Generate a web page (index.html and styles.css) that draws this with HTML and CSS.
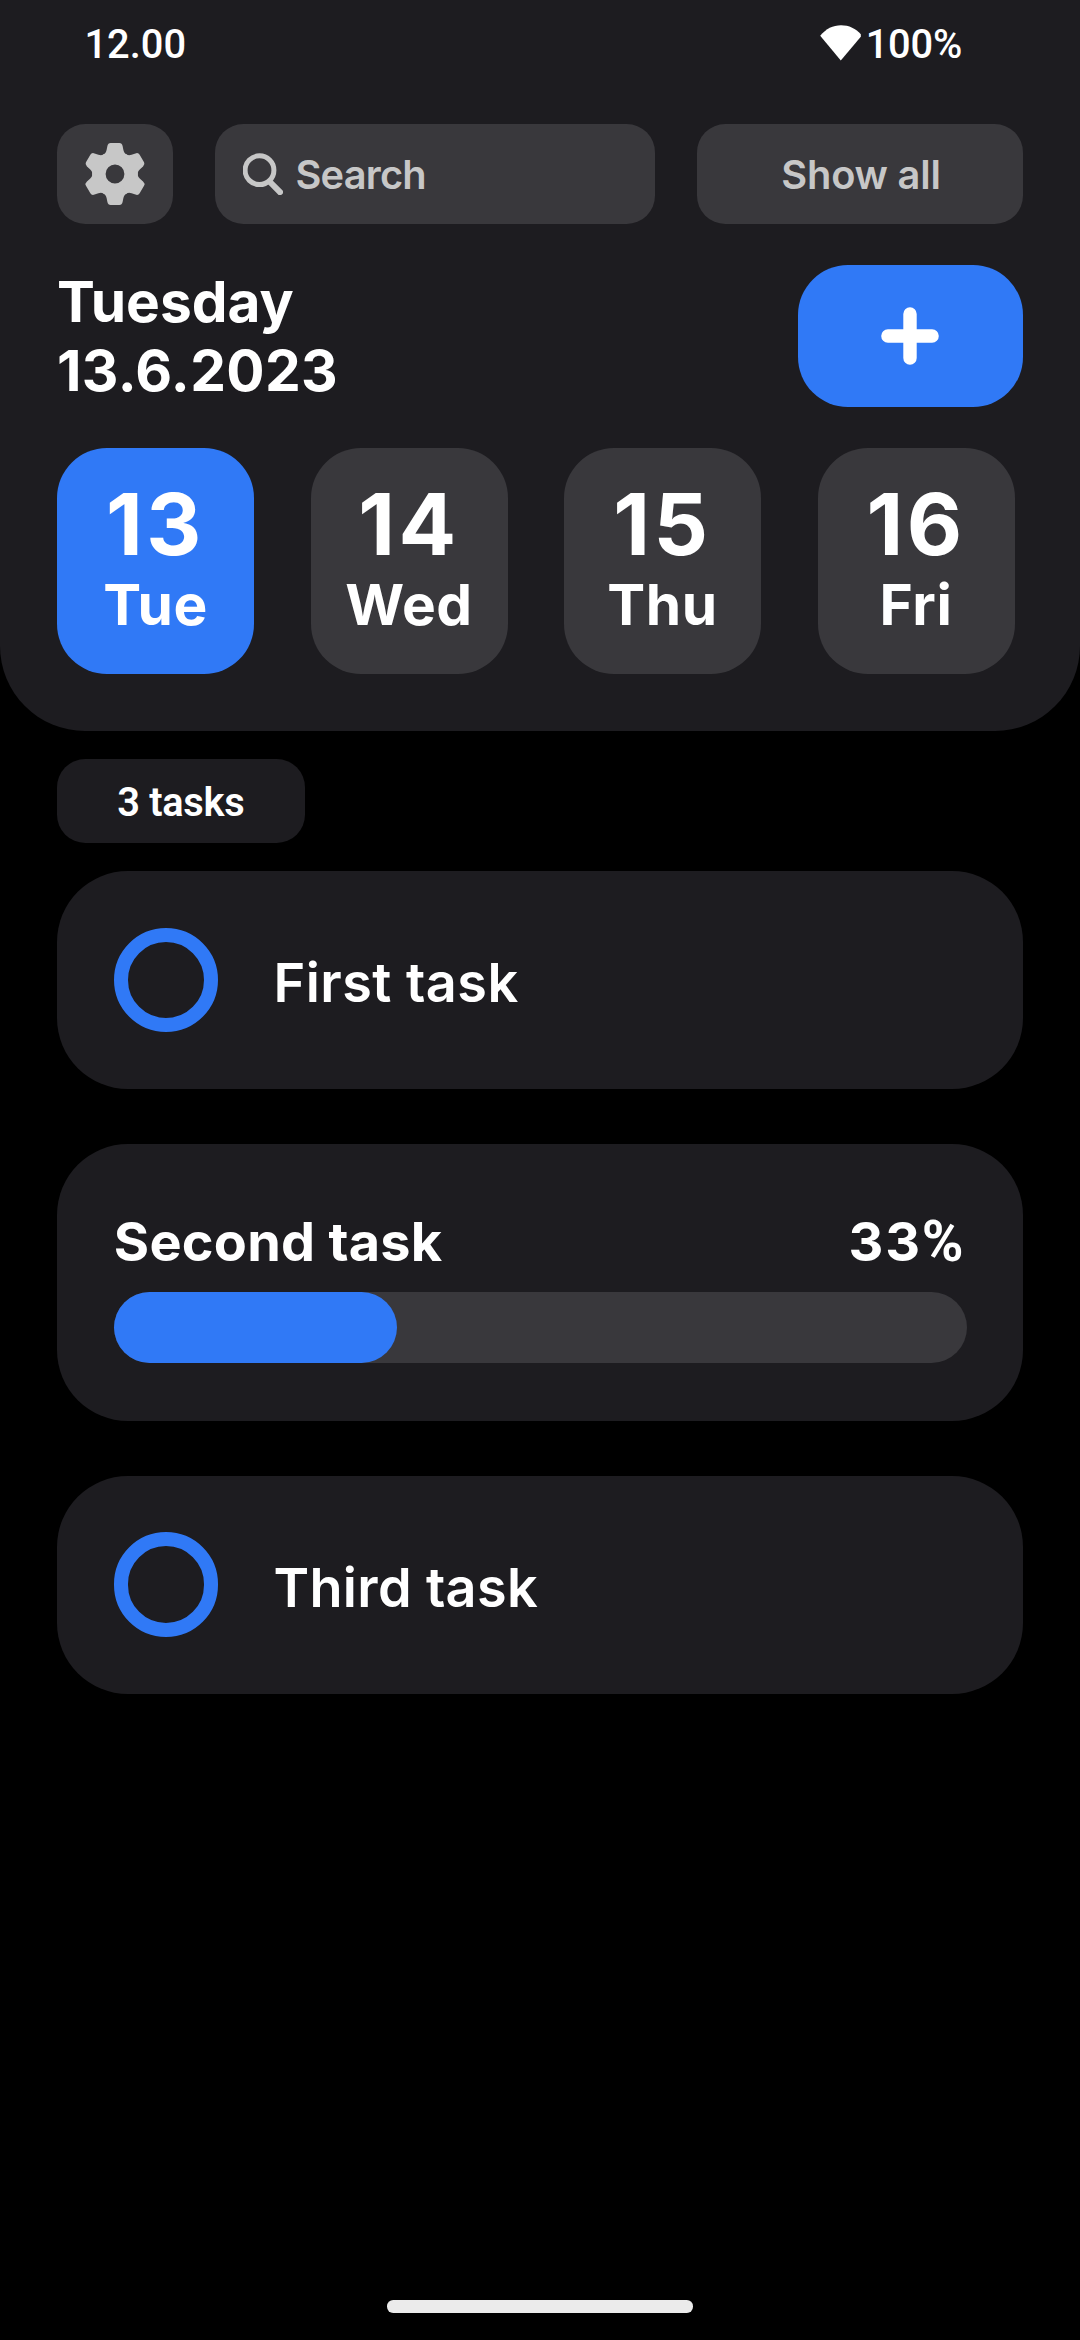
FILE: index.html
```html
<!DOCTYPE html>
<html lang="en">
<head>
<meta charset="utf-8">
<title>Tasks</title>
<link rel="stylesheet" href="styles.css">
</head>
<body>
<div class="screen">
  <header class="header">
    <div class="status">
      <span class="time">12.00</span>
      <span class="battery">
        <svg class="wifi" viewBox="0 0 41 36"><path d="M20.8 35.5 0.2 10.8C6 3.6 13 0.2 21 0.2S36 3.6 40.8 9.2V11.8Z" fill="#fff"/></svg>
        <span class="level">100%</span>
      </span>
    </div>
    <div class="toolbar">
      <button class="tool settings" aria-label="Settings">
        <svg class="gear" viewBox="-31 -31 62 62">
          <defs><path id="tooth" d="M-13-18.5Q-9.2-20-8.4-24L-7.6-28Q-7-31-4.4-31H4.4Q7-31 7.6-28L8.4-24Q9.2-20 13-18.5L8-14H-8Z"/></defs>
          <circle r="16.1" fill="none" stroke="#c7c7c7" stroke-width="13.4"/>
          <g fill="#c7c7c7">
            <use href="#tooth"/><use href="#tooth" transform="rotate(60)"/><use href="#tooth" transform="rotate(120)"/>
            <use href="#tooth" transform="rotate(180)"/><use href="#tooth" transform="rotate(240)"/><use href="#tooth" transform="rotate(300)"/>
          </g>
        </svg>
      </button>
      <div class="tool search">
        <svg class="lens" viewBox="0 0 40 42" fill="none" stroke="#c7c7c7" stroke-linecap="round"><circle cx="16.5" cy="17.2" r="14.4" stroke-width="5"/><path d="M27 29 37 39.2" stroke-width="6"/></svg>
        <span class="search-label">Search</span>
      </div>
      <button class="tool show-all"><span>Show all</span></button>
    </div>
    <div class="heading">
      <h1 class="date"><span>Tuesday</span><span class="numeric">13.6.2023</span></h1>
      <button class="add" aria-label="Add task">
        <svg class="plus" viewBox="0 0 58 58" stroke="#fff" stroke-width="13.4" stroke-linecap="round"><path d="M29 6.9V51.1M6.9 29H51.1"/></svg>
      </button>
    </div>
    <div class="days">
      <div class="day active"><span class="num">13</span><span class="name">Tue</span></div>
      <div class="day"><span class="num">14</span><span class="name">Wed</span></div>
      <div class="day"><span class="num">15</span><span class="name">Thu</span></div>
      <div class="day"><span class="num">16</span><span class="name">Fri</span></div>
    </div>
  </header>
  <main class="tasks">
    <div class="count"><span>3 tasks</span></div>
    <div class="task"><span class="ring"></span><span class="label first">First task</span></div>
    <div class="task progress">
      <div class="row"><span class="second">Second task</span><span class="pct">33<span class="sign">%</span></span></div>
      <div class="bar"><div class="fill" style="width:33.2%"></div></div>
    </div>
    <div class="task"><span class="ring"></span><span class="label third">Third task</span></div>
  </main>
  <div class="home"></div>
</div>
</body>
</html>
```
FILE: styles.css
```css
* { box-sizing: border-box; }
body { margin: 0; background: #000; }
button { border: 0; padding: 0; margin: 0; font: inherit; color: inherit; }
.screen {
  width: 1080px;
  height: 2340px;
  display: flex;
  flex-direction: column;
  overflow: hidden;
  background: #000;
  color: #fff;
  font-family: Inter, sans-serif;
}
svg { display: block; }
.header {
  height: 730.7px;
  padding: 0 57px;
  background: #1d1c20;
  border-radius: 0 0 85px 85px;
}
.status {
  height: 90px;
  margin: 0 61px 34px 27.5px;
  display: flex;
  justify-content: space-between;
  align-items: center;
  font: 500 39.8px/90px Roboto, sans-serif;
}
.battery { display: flex; align-items: center; gap: 5px; }
.level { letter-spacing: -0.2px; }
.wifi { width: 41px; height: 36px; margin-bottom: 5px; }
.toolbar { display: flex; gap: 42px; height: 99.5px; }
.tool {
  display: flex;
  align-items: center;
  border-radius: 28.4px;
  background: #39383c;
  color: #c7c7c7;
  font-size: 39.8px;
  font-weight: 600;
}
.settings { width: 115.5px; justify-content: center; }
.gear { width: 62px; height: 62px; }
.search { width: 440px; padding-left: 28px; gap: 13px; }
.lens { width: 40px; height: 42px; }
.search-label { padding-top: 2px; letter-spacing: -0.8px; }
.show-all { flex: 1; justify-content: center; }
.show-all span { padding: 2px 0 0 2.5px; letter-spacing: -0.2px; }
.heading {
  display: flex;
  justify-content: space-between;
  align-items: center;
  margin-top: 41.5px;
  height: 142px;
}
.date {
  display: flex;
  flex-direction: column;
  margin: 0;
  font-size: 56.8px;
  line-height: 69px;
  font-weight: 700;
}
.numeric { letter-spacing: 0.35px; }
.add {
  width: 225.5px;
  height: 142px;
  display: flex;
  justify-content: center;
  align-items: center;
  border-radius: 50px;
  background: #3079f6;
}
.plus { width: 58px; height: 58px; }
.days { display: flex; gap: 56.5px; margin-top: 41.3px; }
.day {
  width: 197px;
  height: 225.4px;
  padding-top: 30px;
  display: flex;
  flex-direction: column;
  align-items: center;
  border-radius: 50px;
  background: #39383c;
  font-weight: 700;
}
.day.active { background: #3079f6; }
.num { font-size: 85.3px; line-height: 92px; letter-spacing: 3.5px; }
.name { font-size: 56.8px; line-height: 69px; letter-spacing: 0.6px; }
.tasks {
  display: flex;
  flex-direction: column;
  align-items: flex-start;
  padding: 28.1px 57px 0;
}
.count {
  width: 247.6px;
  height: 84.2px;
  margin-bottom: 28px;
  padding-top: 4px;
  display: flex;
  justify-content: center;
  align-items: center;
  border-radius: 28.4px;
  background: #1d1c20;
  font: 600 39.8px Roboto, sans-serif;
  letter-spacing: -0.3px;
}
.task {
  width: 966.3px;
  height: 218.2px;
  margin-bottom: 54.9px;
  padding: 0 56.8px;
  display: flex;
  align-items: center;
  gap: 55px;
  border-radius: 71px;
  background: #1d1c20;
  font-size: 54px;
  font-weight: 600;
}
.ring {
  width: 104.6px;
  height: 104.6px;
  border: 14.2px solid #3079f6;
  border-radius: 50%;
}
.label { padding-top: 5px; }
.first { letter-spacing: 0.5px; }
.third { letter-spacing: 0.35px; }
.progress {
  height: 276.7px;
  flex-direction: column;
  align-items: stretch;
  padding-top: 65.4px;
  gap: 17.7px;
  font-weight: 700;
}
.row { display: flex; justify-content: space-between; height: 65px; line-height: 65px; }
.second { letter-spacing: 0.25px; }
.pct { margin-right: 3px; letter-spacing: 1.7px; }
.sign { font-family: Roboto, sans-serif; font-size: 56.5px; letter-spacing: 0; }
.bar { height: 71px; border-radius: 35.5px; background: #39383c; }
.fill { height: 100%; border-radius: 35.5px; background: #3079f6; }
.home {
  width: 306.5px;
  height: 12.3px;
  margin: auto auto 27.5px;
  border-radius: 6.2px;
  background: #ebebeb;
}
```
